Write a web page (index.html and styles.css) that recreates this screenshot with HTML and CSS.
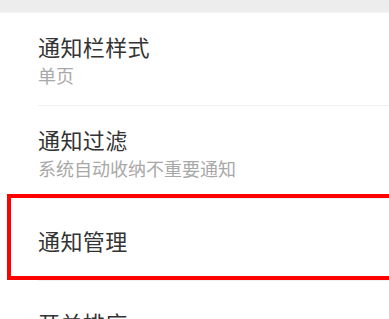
FILE: index.html
```html
<!DOCTYPE html>
<html lang="zh-CN">
<head>
    <meta charset="UTF-8">
    <meta name="viewport" content="width=device-width, initial-scale=1.0">
    <title>通知</title>
    <link rel="stylesheet" href="styles.css">
</head>
<body>
    <div class="topbar"></div>
    <ul class="settings">
        <li class="item two-line">
            <div class="inner">
                <p class="title">通知栏样式</p>
                <p class="sub">单页</p>
            </div>
        </li>
        <li class="item two-line">
            <div class="inner">
                <p class="title">通知过滤</p>
                <p class="sub">系统自动收纳不重要通知</p>
            </div>
        </li>
        <li class="item one-line marked">
            <div class="inner">
                <p class="title">通知管理</p>
            </div>
            <div class="highlight"></div>
        </li>
        <li class="item one-line">
            <div class="inner">
                <p class="title">开关排序</p>
            </div>
        </li>
    </ul>
</body>
</html>
```

FILE: styles.css
```css
* {
  margin: 0;
  padding: 0;
  box-sizing: border-box;
}
body {
  background-color: white;
  font-family: "Noto Sans CJK SC", "Noto Sans", sans-serif;
  overflow: hidden;
}
.topbar {
  height: 13px;
  background-color: #ededed;
  border-bottom: 1px solid #f4f4f4;
}
ul {
  list-style-type: none;
}
.item {
  position: relative;
  padding-left: 38px;
}
.item .inner {
  display: flex;
  flex-direction: column;
  justify-content: center;
  border-bottom: 1px solid #f0f0f0;
}
.two-line .inner {
  height: 93px;
}
.one-line .inner {
  height: 82px;
}
.title {
  color: #333333;
  font-size: 22px;
  line-height: 28px;
  letter-spacing: 0.4px;
}
.sub {
  color: #a8a8a8;
  font-size: 18px;
  line-height: 22px;
  margin-top: 4px;
}

/* annotation box */
.highlight {
  position: absolute;
  top: -5px;
  left: 7px;
  right: -20px;
  height: 86px;
  border: 4px solid #ff0000;
}
```
